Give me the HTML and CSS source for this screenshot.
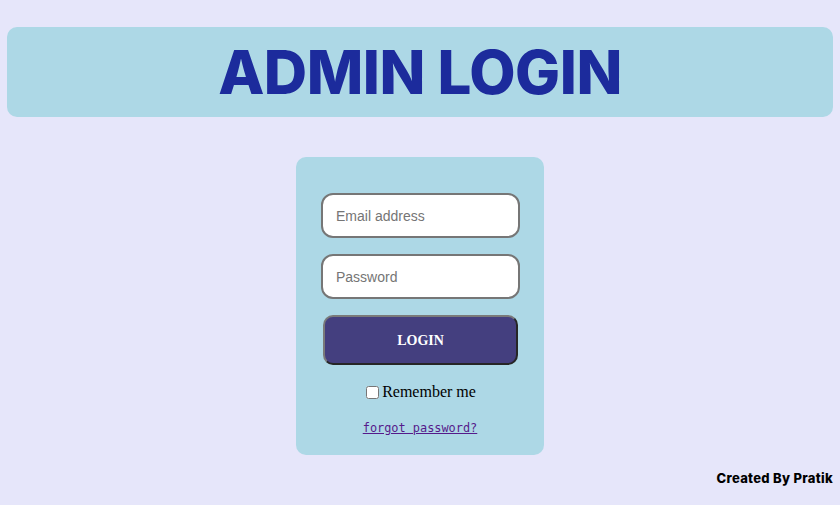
FILE: index.html
```html
<!DOCTYPE html>
<html>
<head>
<meta charset="utf-8">
<title>Admin Login</title>
<link rel="stylesheet" href="styles.css">
</head>
<body>
<header class="banner">
  <h1 class="title">ADMIN LOGIN</h1>
</header>
<main class="wrap">
  <form class="card">
    <input class="field" type="email" placeholder="Email address">
    <input class="field" type="password" placeholder="Password">
    <button class="btn" type="button">LOGIN</button>
    <label class="remember"><input type="checkbox" class="check">Remember me</label>
    <a class="forgot" href="#">forgot password?</a>
  </form>
</main>
<footer class="foot">Created By Pratik</footer>
</body>
</html>
```
FILE: styles.css
```css
html, body {
  margin: 0;
  padding: 0;
}
body {
  background: #e6e6fa;
  padding: 27px 7px 0;
  height: 505px;
  box-sizing: border-box;
  font-family: "Liberation Serif", serif;
}
.banner {
  background: #add8e6;
  border-radius: 10px;
  height: 90px;
  display: flex;
  align-items: center;
  justify-content: center;
}
.title {
  margin: 0;
  font-family: "Inter", "Open Sans", sans-serif;
  font-weight: 800;
  font-size: 60px;
  letter-spacing: -0.5px;
  color: #1c2b9c;
  line-height: 1;
}
.wrap {
  display: flex;
  justify-content: center;
  margin-top: 40px;
}
.card {
  width: 248px;
  height: 298px;
  box-sizing: border-box;
  background: #add8e6;
  border-radius: 10px;
  padding: 36px 0 0;
  display: flex;
  flex-direction: column;
  align-items: center;
}
.field {
  width: 199px;
  height: 45px;
  box-sizing: border-box;
  border: 2px solid #767676;
  border-radius: 12px;
  background: #fff;
  padding: 0 13px;
  font-family: "Liberation Sans", Arial, sans-serif;
  font-size: 14px;
  color: #000;
  margin: 0 0 16px 1px;
  outline: none;
}
.field::placeholder {
  color: #757575;
}
.btn {
  width: 195px;
  height: 50px;
  box-sizing: border-box;
  background: #443f7f;
  border: 2px solid;
  border-color: #7a7a7a #262626 #262626 #7a7a7a;
  border-radius: 10px;
  color: #fff;
  font-family: "Liberation Serif", serif;
  font-weight: bold;
  font-size: 14px;
  margin: 0 0 18px 1px;
  padding: 2px 0 0;
}
.remember {
  display: flex;
  align-items: center;
  font-size: 16px;
  color: #000;
  margin-left: 2px;
}
.check {
  width: 13px;
  height: 13px;
  margin: 0 3px 0 0;
}
.forgot {
  margin-top: 20px;
  margin-left: 0;
  font-family: "DejaVu Sans Mono", monospace;
  font-size: 11.9px;
  color: #551a8b;
}
.foot {
  position: absolute;
  right: 7px;
  top: 470px;
  font-family: "Inter", "Open Sans", sans-serif;
  font-weight: 800;
  font-size: 13px;
  letter-spacing: 0.3px;
  color: #000;
}
```
